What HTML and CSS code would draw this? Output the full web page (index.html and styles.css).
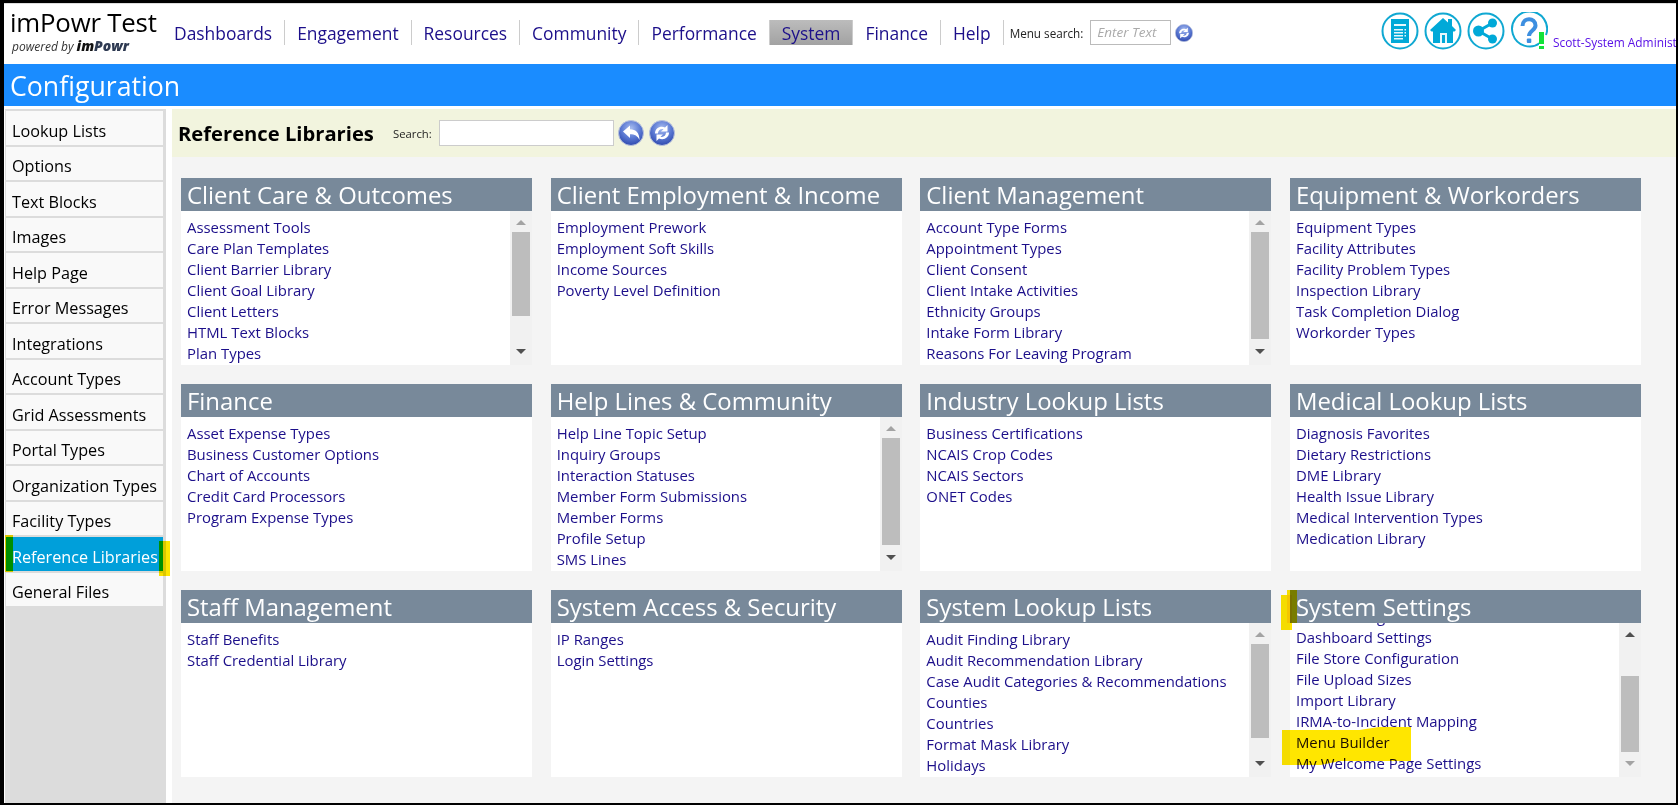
FILE: index.html
```html
<!DOCTYPE html>
<html lang="en">
<head>
<meta charset="utf-8">
<title>Configuration</title>
<link rel="stylesheet" href="styles.css">
</head>
<body>
<div class="frame">
  <header class="topbar">
    <div class="brand">
      <div class="brand-name">imPowr Test</div>
      <div class="brand-sub">powered by <b>im<span class="brand-slate">Powr</span></b></div>
    </div>
    <nav class="nav">
      <a class="nav-item">Dashboards</a>
      <a class="nav-item">Engagement</a>
      <a class="nav-item">Resources</a>
      <a class="nav-item">Community</a>
      <a class="nav-item">Performance</a>
      <a class="nav-item nav-active">System</a>
      <a class="nav-item">Finance</a>
      <a class="nav-item">Help</a>
    </nav>
    <div class="menu-search">
      <span class="menu-label">Menu search:</span>
      <span class="menu-input">Enter Text</span>
      <svg class="go" viewBox="0 0 26 26"><use href="#refresh"/></svg>
    </div>
    <div class="tools">
      <svg class="tool" viewBox="0 0 38 38"><circle cx="19" cy="19" r="17.5" class="ring"/><path class="fill" d="M10 7h18v24H10z"/><path class="cut" d="M13 12h12v2H13zM13 17h9v1.500H13zM13 20h9v1.500H13zM13 23h9v1.500H13zM13 26h9v1.500H13zM23.500 17H25v1.500h-1.500zM23.500 20H25v1.500h-1.500zM23.500 23H25v1.500h-1.500z"/></svg>
      <svg class="tool" viewBox="0 0 38 38"><circle cx="19" cy="19" r="17.500" class="ring"/><path class="fill" d="M19 6l5 4.500V7h4v7l4 4-1.500 1.500H29V31H9V19.500H7.500L6 18z"/><path class="cut" d="M16 21h7v10h-2v-8h-3v8h-2z"/></svg>
      <svg class="tool" viewBox="0 0 38 38"><circle cx="19" cy="19" r="17.500" class="ring"/><circle class="fill" cx="11.500" cy="19" r="5.500"/><circle class="fill" cx="25.500" cy="11" r="4.500"/><circle class="fill" cx="25.500" cy="27" r="4.500"/><path class="line" d="M11.500 19l14-8M11.500 19l14 8"/></svg>
      <div class="tool-help">
        <svg class="tool" viewBox="0 0 38 38"><path class="ring" d="M30 31A17.500 17.500 0 1 1 36 23"/><path class="q" d="M12.500 14c0-9 13-9 13-.5 0 5-6.500 5-6.500 10.500"/><rect class="qdot" x="16.800" y="26.500" width="4.500" height="4.500" rx="1"/></svg>
        <span class="alert"></span>
      </div>
      <a class="user">Scott-System Administrator</a>
    </div>
  </header>

  <h1 class="title-bar">Configuration</h1>

  <div class="workspace">
    <aside class="sidebar">
      <a class="side-item">Lookup Lists</a>
      <a class="side-item">Options</a>
      <a class="side-item">Text Blocks</a>
      <a class="side-item">Images</a>
      <a class="side-item">Help Page</a>
      <a class="side-item">Error Messages</a>
      <a class="side-item">Integrations</a>
      <a class="side-item">Account Types</a>
      <a class="side-item">Grid Assessments</a>
      <a class="side-item">Portal Types</a>
      <a class="side-item">Organization Types</a>
      <a class="side-item">Facility Types</a>
      <a class="side-item side-active">Reference Libraries</a>
      <a class="side-item">General Files</a>
    </aside>

    <main class="main">
      <div class="banner">
        <h2 class="banner-title">Reference Libraries</h2>
        <label class="banner-label">Search:</label>
        <div class="banner-input"></div>
        <svg class="round" viewBox="0 0 26 26"><use href="#back"/></svg>
        <svg class="round" viewBox="0 0 26 26"><use href="#refresh"/></svg>
      </div>

      <div class="grid">
        <section class="panel">
          <h3 class="panel-head">Client Care &amp; Outcomes</h3>
          <div class="panel-body">
            <ul class="list">
              <li>Assessment Tools</li><li>Care Plan Templates</li><li>Client Barrier Library</li><li>Client Goal Library</li><li>Client Letters</li><li>HTML Text Blocks</li><li>Plan Types</li>
            </ul>
            <div class="scroll"><i class="arrow up dim"></i><div class="thumb" style="margin-top:7px;height:84px"></div><i class="arrow down"></i></div>
          </div>
        </section>
        <section class="panel">
          <h3 class="panel-head">Client Employment &amp; Income</h3>
          <div class="panel-body">
            <ul class="list">
              <li>Employment Prework</li><li>Employment Soft Skills</li><li>Income Sources</li><li>Poverty Level Definition</li>
            </ul>
          </div>
        </section>
        <section class="panel">
          <h3 class="panel-head">Client Management</h3>
          <div class="panel-body">
            <ul class="list">
              <li>Account Type Forms</li><li>Appointment Types</li><li>Client Consent</li><li>Client Intake Activities</li><li>Ethnicity Groups</li><li>Intake Form Library</li><li>Reasons For Leaving Program</li>
            </ul>
            <div class="scroll"><i class="arrow up dim"></i><div class="thumb" style="margin-top:7px;height:107px"></div><i class="arrow down"></i></div>
          </div>
        </section>
        <section class="panel">
          <h3 class="panel-head">Equipment &amp; Workorders</h3>
          <div class="panel-body">
            <ul class="list">
              <li>Equipment Types</li><li>Facility Attributes</li><li>Facility Problem Types</li><li>Inspection Library</li><li>Task Completion Dialog</li><li>Workorder Types</li>
            </ul>
          </div>
        </section>

        <section class="panel">
          <h3 class="panel-head">Finance</h3>
          <div class="panel-body">
            <ul class="list">
              <li>Asset Expense Types</li><li>Business Customer Options</li><li>Chart of Accounts</li><li>Credit Card Processors</li><li>Program Expense Types</li>
            </ul>
          </div>
        </section>
        <section class="panel">
          <h3 class="panel-head">Help Lines &amp; Community</h3>
          <div class="panel-body">
            <ul class="list">
              <li>Help Line Topic Setup</li><li>Inquiry Groups</li><li>Interaction Statuses</li><li>Member Form Submissions</li><li>Member Forms</li><li>Profile Setup</li><li>SMS Lines</li>
            </ul>
            <div class="scroll"><i class="arrow up dim"></i><div class="thumb" style="margin-top:7px;height:107px"></div><i class="arrow down"></i></div>
          </div>
        </section>
        <section class="panel">
          <h3 class="panel-head">Industry Lookup Lists</h3>
          <div class="panel-body">
            <ul class="list">
              <li>Business Certifications</li><li>NCAIS Crop Codes</li><li>NCAIS Sectors</li><li>ONET Codes</li>
            </ul>
          </div>
        </section>
        <section class="panel">
          <h3 class="panel-head">Medical Lookup Lists</h3>
          <div class="panel-body">
            <ul class="list">
              <li>Diagnosis Favorites</li><li>Dietary Restrictions</li><li>DME Library</li><li>Health Issue Library</li><li>Medical Intervention Types</li><li>Medication Library</li>
            </ul>
          </div>
        </section>

        <section class="panel">
          <h3 class="panel-head">Staff Management</h3>
          <div class="panel-body">
            <ul class="list">
              <li>Staff Benefits</li><li>Staff Credential Library</li>
            </ul>
          </div>
        </section>
        <section class="panel">
          <h3 class="panel-head">System Access &amp; Security</h3>
          <div class="panel-body">
            <ul class="list">
              <li>IP Ranges</li><li>Login Settings</li>
            </ul>
          </div>
        </section>
        <section class="panel">
          <h3 class="panel-head">System Lookup Lists</h3>
          <div class="panel-body">
            <ul class="list">
              <li>Audit Finding Library</li><li>Audit Recommendation Library</li><li>Case Audit Categories &amp; Recommendations</li><li>Counties</li><li>Countries</li><li>Format Mask Library</li><li>Holidays</li>
            </ul>
            <div class="scroll"><i class="arrow up dim"></i><div class="thumb" style="margin-top:7px;height:94px"></div><i class="arrow down"></i></div>
          </div>
        </section>
        <section class="panel">
          <h3 class="panel-head">System Settings</h3>
          <div class="panel-body">
            <ul class="list list-scrolled">
              <li>Color Settings</li><li>Dashboard Settings</li><li>File Store Configuration</li><li>File Upload Sizes</li><li>Import Library</li><li>IRMA-to-Incident Mapping</li><li>Menu Builder</li><li>My Welcome Page Settings</li>
            </ul>
            <div class="scroll"><i class="arrow up"></i><div class="thumb" style="margin-top:39px;height:76px"></div><i class="arrow down dim"></i></div>
          </div>
        </section>
      </div>
    </main>
  </div>

  <span class="mark mark-side-l"></span>
  <span class="mark mark-side-r"></span>
  <span class="mark mark-sys-a"></span>
  <span class="mark mark-sys-b"></span>
  <span class="mark mark-menu"></span>
</div>

<svg class="defs" aria-hidden="true">
  <defs>
    <radialGradient id="orb" cx="50%" cy="32%" r="70%">
      <stop offset="0" stop-color="#a9bdf0"/>
      <stop offset=".55" stop-color="#5a78d2"/>
      <stop offset="1" stop-color="#2c46ac"/>
    </radialGradient>
    <symbol id="back" viewBox="0 0 26 26">
      <circle cx="13" cy="13" r="12.500" fill="url(#orb)" stroke="#b9c2dc"/>
      <path fill="#fff" d="M5 11.500L12 5.500V9.200C18 9.200 21.500 13 21.500 20C19.500 16 17 14.300 12 14.300V18z"/>
    </symbol>
    <symbol id="refresh" viewBox="0 0 26 26">
      <circle cx="13" cy="13" r="12.500" fill="url(#orb)" stroke="#b9c2dc"/>
      <path fill="#fff" d="M6 13.500C6 8.500 11 5.500 16 7.500L18.500 5V11.500H12L14.500 9.200C11.500 8.500 9 10.500 9 13.500zM20 12.500C20 17.500 15 20.500 10 18.500L7.500 21V14.500H14L11.500 16.800C14.500 17.500 17 15.500 17 12.500z"/>
    </symbol>
  </defs>
</svg>
</body>
</html>
```

FILE: styles.css
```css
* { box-sizing: border-box; }
html, body { margin: 0; padding: 0; height: 806px; overflow: hidden; background: #fff; }
body { font-family: "Open Sans", "Noto Sans", sans-serif; color: #000; }
h1, h2, h3, ul { margin: 0; padding: 0; font-weight: normal; }
li { list-style: none; }

.frame {
  position: relative;
  width: 1678px;
  height: 805px;
  border-style: solid;
  border-color: #000;
  border-width: 3px 2px 2px 4px;
  overflow: hidden;
  background: #fff;
  display: flex;
  flex-direction: column;
}
.defs { position: absolute; width: 0; height: 0; }

/* top bar */
.topbar {
  height: 61px;
  flex: none;
  display: flex;
  align-items: flex-start;
  border-top: 1px solid #ddd;
}
.brand { width: 158px; flex: none; padding: 3px 0 0 6px; }
.brand-name { font-size: 25.800px; line-height: 31px; letter-spacing: -0.2px; white-space: nowrap; }
.brand-sub { font-size: 12px; line-height: 15px; font-style: italic; color: #333; padding-left: 2px; white-space: nowrap; }
.brand-sub b { font-size: 14px; font-weight: 800; color: #111; }
.brand-slate { color: #2e3a52; }

.nav { display: flex; margin-top: 16px; }
.nav-item {
  height: 25px;
  line-height: 27px;
  padding: 0 12px;
  font-size: 17.420px;
  color: #1c0f8a;
  border-right: 1px solid #ccc;
  white-space: nowrap;
}
.nav-active { background: linear-gradient(#bcbcbc, #a2a2a2); }

.menu-search { display: flex; align-items: center; margin: 16px 0 0 6px; height: 25px; flex: none; }
.menu-label { font-size: 11.700px; color: #222; margin-right: 7px; white-space: nowrap; }
.menu-input {
  width: 81px;
  height: 25px;
  line-height: 22px;
  border: 1px solid #bbb;
  padding-left: 6px;
  font-size: 13.500px;
  font-style: italic;
  color: #aaa;
  white-space: nowrap;
}
.go { width: 18px; height: 18px; margin-left: 4px; }

.tools { display: flex; margin-left: auto; padding-top: 8px; align-items: flex-start; width: 295px; flex: none; overflow: hidden; gap: 5px; }
.tool { width: 38px; height: 38px; display: block; flex: none; }
.ring { fill: none; stroke: #10a8d2; stroke-width: 2; }
.fill { fill: #00a9d8; }
.cut { fill: #e6f7fc; }
.line { stroke: #00a9d8; stroke-width: 3; fill: none; }
.q { fill: none; stroke: #3d8fe0; stroke-width: 4; }
.qdot { fill: #3d8fe0; }
.tool-help { position: relative; flex: none; }
.alert {
  position: absolute;
  left: 29px;
  top: 20px;
  width: 5px;
  height: 17px;
  background: linear-gradient(#12e23a 0, #12e23a 70%, #fff 70%, #fff 80%, #12e23a 80%);
}
.user { font-size: 11.900px; color: #5a12e6; margin: 22px 0 0 0; white-space: nowrap; }

.title-bar {
  height: 42px;
  flex: none;
  background: #1a8cff;
  color: #fff;
  font-size: 26.700px;
  line-height: 44px;
  padding-left: 6px;
  overflow: hidden;
}

/* workspace */
.workspace { flex: 1; display: flex; min-height: 0; padding-top: 3px; }
.sidebar {
  width: 161px;
  margin-left: 1px;
  flex: none;
  background: #dcdcdc;
  padding: 2px 3px 0 1px;
  display: flex;
  flex-direction: column;
  gap: 2px;
}
.side-item {
  height: 33.500px;
  line-height: 33px;
  padding: 3.500px 0 0 6px;
  background: #f9f9f9;
  font-size: 16.200px;
  white-space: nowrap;
  flex: none;
}
.side-active { background: #009fda; color: #fff; }

.main { flex: 1; margin-left: 6px; background: #f4f4f4; min-width: 0; }
.banner {
  height: 48px;
  background: #f2f4de;
  display: flex;
  align-items: center;
  padding-left: 6px;
}
.banner-title { font-size: 20.200px; font-weight: 700; width: 215px; white-space: nowrap; }
.banner-label { font-size: 11.300px; width: 46px; color: #222; }
.banner-input { width: 175px; height: 26px; background: #fff; border: 1px solid #ccc; margin-right: 4px; }
.round { width: 26px; height: 26px; margin-right: 5px; }

.grid {
  display: grid;
  grid-template-columns: repeat(4, 351px);
  grid-template-rows: repeat(3, 187px);
  column-gap: 18.670px;
  row-gap: 19px;
  padding: 21px 0 0 9px;
}
.panel { display: flex; flex-direction: column; min-height: 0; }
.panel-head {
  height: 33px;
  flex: none;
  background: #78899a;
  color: #fff;
  font-size: 23.900px;
  line-height: 33px;
  padding-left: 6px;
  white-space: nowrap;
  overflow: hidden;
}
.panel-body { flex: 1; background: #fff; display: flex; min-height: 0; overflow: hidden; }
.list { flex: 1; padding: 5.500px 0 0 6px; min-width: 0; overflow: hidden; }
.list-scrolled { padding-top: 0; margin-top: -17px; overflow: visible; }
.list li { height: 21px; line-height: 21px; font-size: 14.900px; color: #1c0f8a; white-space: nowrap; }

.scroll {
  width: 22px;
  flex: none;
  background: #f1f1f1;
  display: flex;
  flex-direction: column;
  align-items: center;
  position: relative;
  padding-top: 9px;
}
.thumb { width: 18px; background: #bdbdbd; flex: none; }
.arrow { display: block; width: 0; height: 0; border-left: 5px solid transparent; border-right: 5px solid transparent; flex: none; }
.arrow.up { border-bottom: 5px solid #505050; }
.arrow.down { border-top: 5px solid #505050; position: absolute; bottom: 11px; }
.arrow.up.dim { border-bottom-color: #a3a3a3; }
.arrow.down.dim { border-top-color: #a3a3a3; }

/* highlighter strokes drawn over the page */
.mark { position: absolute; background: #ffe600; mix-blend-mode: multiply; }
.mark-side-l { left: 1px; top: 532px; width: 8px; height: 37px; }
.mark-side-r { left: 155px; top: 538px; width: 11px; height: 35px; }
.mark-sys-a { left: 1283px; top: 587px; width: 10px; height: 33px; }
.mark-sys-b { left: 1277px; top: 592px; width: 11px; height: 35px; }
.mark-menu {
  left: 1278px;
  top: 724px;
  width: 129px;
  height: 38px;
  clip-path: polygon(0 3px, 60% 3px, 75% 0, 100% 0, 100% 34px, 45% 34px, 30% 38px, 0 38px);
}
```
